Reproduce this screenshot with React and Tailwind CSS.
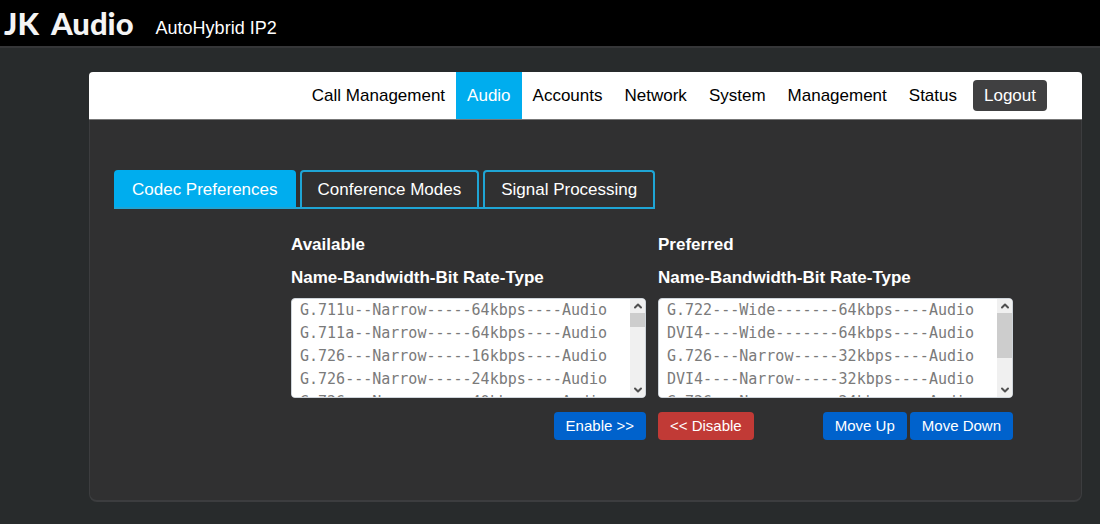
import { ChevronDown, ChevronUp } from "lucide-react";

const navItems = [
  "Call Management",
  "Audio",
  "Accounts",
  "Network",
  "System",
  "Management",
  "Status",
];

const tabs = ["Codec Preferences", "Conference Modes", "Signal Processing"];

const available = [
  "G.711u--Narrow-----64kbps----Audio",
  "G.711a--Narrow-----64kbps----Audio",
  "G.726---Narrow-----16kbps----Audio",
  "G.726---Narrow-----24kbps----Audio",
  "G.726---Narrow-----40kbps----Audio",
];

const preferred = [
  "G.722---Wide-------64kbps----Audio",
  "DVI4----Wide-------64kbps----Audio",
  "G.726---Narrow-----32kbps----Audio",
  "DVI4----Narrow-----32kbps----Audio",
  "G.726---Narrow-----24kbps----Audio",
];

function Button({ className = "bg-[#0062cc]", children }) {
  return (
    <button type="button" className={`h-7 rounded px-3 text-[15px] leading-7 text-white ${className}`}>
      {children}
    </button>
  );
}

function CodecList({ id, title, codecs, thumb, children }) {
  return (
    <div className="min-w-0 flex-1">
      <h2 className="text-[17px] leading-6 font-bold">{title}</h2>
      <label htmlFor={id} className="mt-[9px] block text-[17px] leading-6 font-bold">
        Name-Bandwidth-Bit Rate-Type
      </label>

      <div className="mt-2 flex h-[100px] overflow-hidden rounded-sm border border-[#ced4da] bg-white">
        <select
          id={id}
          multiple
          className="mt-[2px] min-w-0 flex-1 overflow-y-auto bg-white p-0 font-['DejaVu_Sans_Mono',monospace] text-[15px] text-[#7a7a7a] outline-none [scrollbar-width:none]"
        >
          {codecs.map((codec) => (
            <option key={codec} className="h-[23px] px-2 py-0 leading-[23px]">
              {codec}
            </option>
          ))}
        </select>

        {/* Scrollbar */}
        <div aria-hidden="true" className="flex w-[15px] flex-col items-center bg-[#f0f0f0] text-[#505050]">
          <ChevronUp className="my-px h-3 w-3" strokeWidth={4} />
          <div className={`w-full bg-[#cdcdcd] ${thumb}`}></div>
          <ChevronDown className="mt-auto mb-px h-3 w-3" strokeWidth={4} />
        </div>
      </div>

      <div className="mt-[14px] flex gap-[3px]">{children}</div>
    </div>
  );
}

export default function App() {
  return (
    <div className="min-h-screen bg-[#282b2c] pb-[22px] font-['Liberation_Sans',Arial,sans-serif] text-white">
      {/* Top bar */}
      <header className="flex h-12 items-center border-b-2 border-[#353638] bg-black pl-1">
        <a href="#" className="flex gap-3 font-['Lato',sans-serif] text-[31px] leading-none font-black text-[#f4f4f4]">
          <span>JK</span>
          <span>Audio</span>
        </a>
        <h1 className="mt-[10px] ml-[22px] text-lg leading-6">AutoHybrid IP2</h1>
      </header>

      <main className="mt-6 mr-[18px] ml-[89px]">
        {/* Main navigation */}
        <nav className="flex h-12 items-stretch justify-end rounded-t border-b border-[#777] bg-white pr-[35px] text-[17px] text-black">
          {navItems.map((item) => (
            <a
              key={item}
              href="#"
              className={`px-[11px] leading-[47px] ${item === "Audio" ? "bg-[#00adee] text-white" : ""}`}
            >
              {item}
            </a>
          ))}
          <button type="button" className="mt-2 ml-[5px] h-[31px] rounded bg-[#404041] px-[11px] text-white">
            Logout
          </button>
        </nav>

        <section className="rounded-b-lg border-x border-b-2 border-[#3c3d3f] bg-[#303031] px-6 pt-[50px] pb-[60px]">
          {/* Tabs */}
          <div role="tablist" className="flex text-[17px]">
            <div className="flex gap-1 border-b-2 border-[#1fa5d5]">
              {tabs.map((tab, i) => (
                <button
                  key={tab}
                  type="button"
                  role="tab"
                  aria-selected={i === 0}
                  className={`h-[37px] rounded-t border-2 border-b-0 px-4 ${
                    i === 0 ? "border-[#00adee] bg-[#00adee]" : "border-[#1fa5d5]"
                  }`}
                >
                  {tab}
                </button>
              ))}
            </div>
          </div>

          {/* Codec lists */}
          <div className="mt-6 mr-[44px] ml-[177px] flex gap-3">
            <CodecList id="available" title="Available" codecs={available} thumb="h-[14px]">
              <Button className="ml-auto bg-[#0062cc]">Enable &gt;&gt;</Button>
            </CodecList>
            <CodecList id="preferred" title="Preferred" codecs={preferred} thumb="h-[45px]">
              <Button className="mr-auto bg-[#c13a36]">&lt;&lt; Disable</Button>
              <Button>Move Up</Button>
              <Button>Move Down</Button>
            </CodecList>
          </div>
        </section>
      </main>
    </div>
  );
}
